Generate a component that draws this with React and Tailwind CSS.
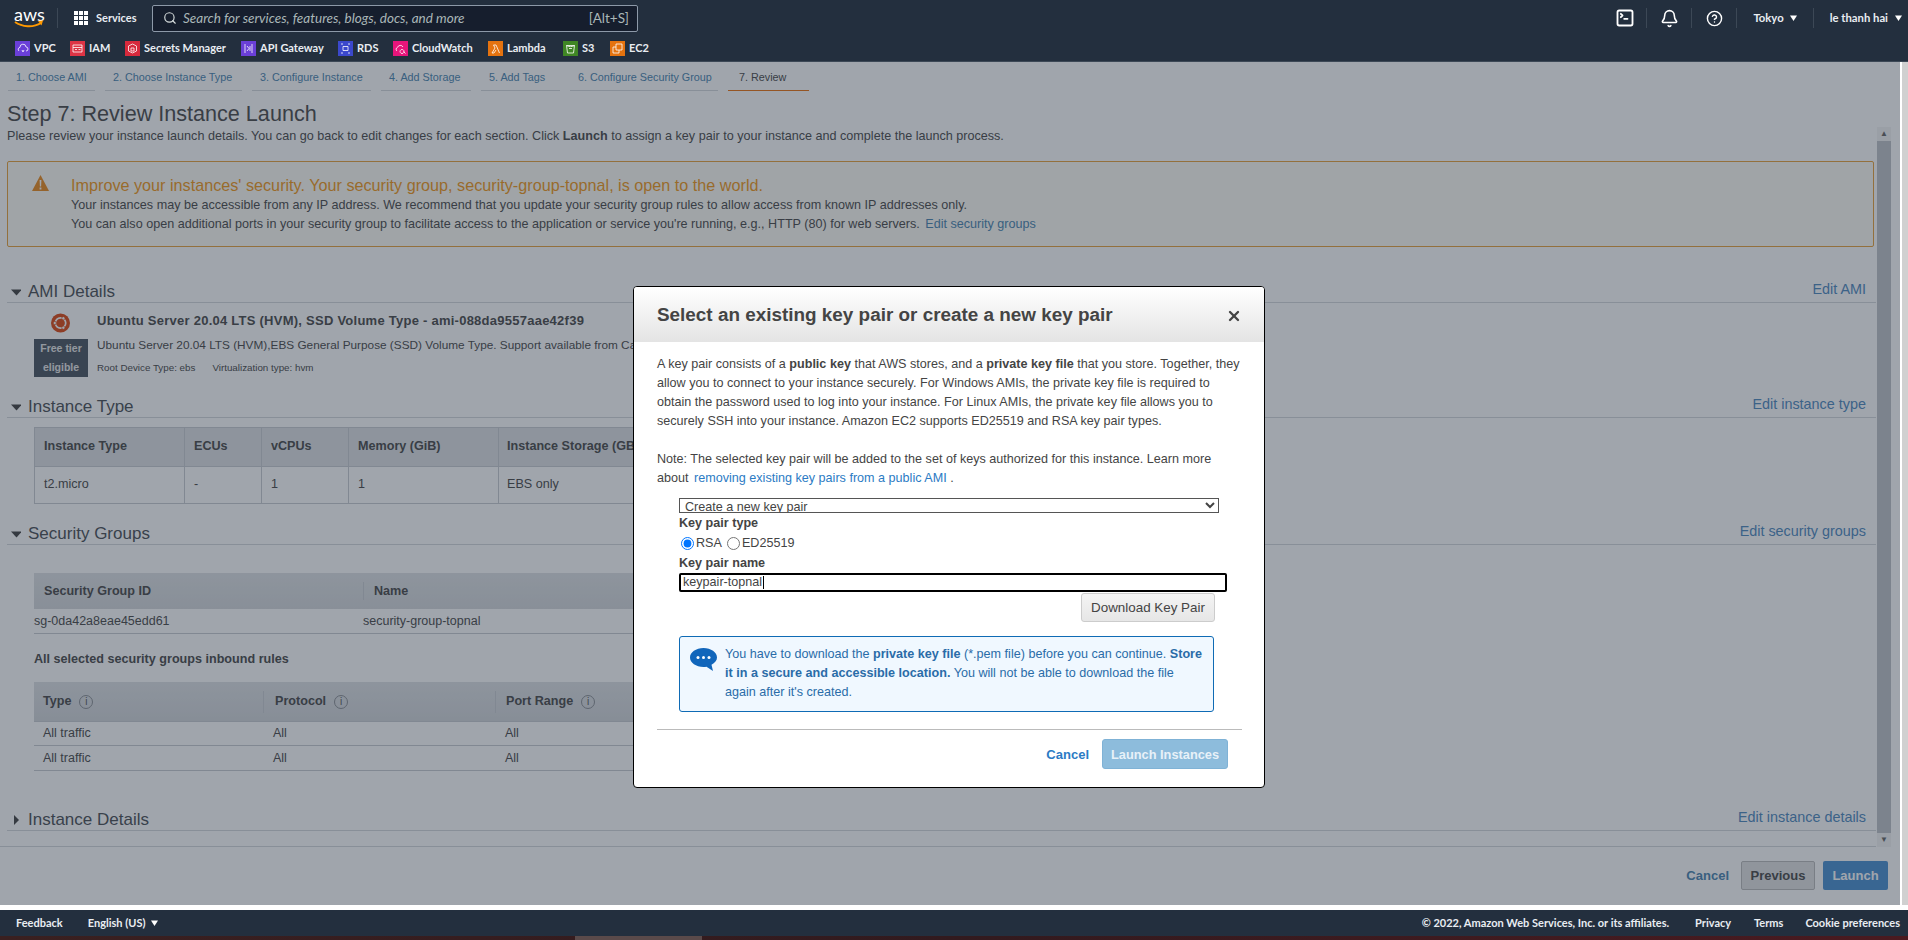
import React from "react";
import { Search, SquareTerminal, Bell, CircleHelp, X } from "lucide-react";

const services = [
  { n: "VPC", c: "bg-[#6a3fd8]", w: "w-[55px]", d: "M4 10a2 2 0 0 1 1-3.6A3 3 0 0 1 11 6a2 2 0 0 1 0 4M7 9l1 2 1-2" },
  { n: "IAM", c: "bg-[#dd3445]", w: "w-[55px]", d: "M3 4h9v7H3zM3 6.5h9M5 8.500h2M8.500 8.500h2" },
  { n: "Secrets Manager", c: "bg-[#d7293c]", w: "w-[116px]", d: "M7.500 3l4 2v5l-4 2-4-2V5zM6 7h3v3H6z" },
  { n: "API Gateway", c: "bg-[#6a3fd8]", w: "w-[97px]", d: "M4 3v9M11 3v9M6 5l2 2.500-2 2.500M9 5v5" },
  { n: "RDS", c: "bg-[#3b48cc]", w: "w-[55px]", d: "M5 5.500h5v4H5zM3 3h2M10 3h2M3 12h2M10 12h2" },
  { n: "CloudWatch", c: "bg-[#e7157b]", w: "w-[95px]", d: "M4 10a2 2 0 0 1 .5-3.600A3 3 0 0 1 10 6M9 8.500a2 2 0 1 0 .1 0M10.500 10.500l2 2" },
  { n: "Lambda", c: "bg-[#e5730f]", w: "w-[75px]", d: "M4 12l3-5-1.500-3H8l3.500 8M4 12h2l2-3" },
  { n: "S3", c: "bg-[#3f8624]", w: "w-[47px]", d: "M3.500 4.500h8l-1 7.500h-6zM3.500 4.500c2 1.500 6 1.500 8 0M6 7.500h3" },
  { n: "EC2", c: "bg-[#e5730f]", w: "", d: "M6 3h6v6H6zM3 6h3M3 6v6h6V9" },
];

const tabs = [
  ["1. Choose AMI", "w-[87px]"],
  ["2. Choose Instance Type", "w-[137px]"],
  ["3. Configure Instance", "w-[119px]"],
  ["4. Add Storage", "w-[90px]"],
  ["5. Add Tags", "w-[79px]"],
  ["6. Configure Security Group", "w-[148px]"],
];

function Caret({ right }) {
  return (
    <svg width="10" height="10" viewBox="0 0 10 10" className="shrink-0">
      {right ? <path d="M3 0l5 5-5 5z" fill="#444" /> : <path d="M0 2.500h11l-5.500 6z" fill="#444" />}
    </svg>
  );
}

function SectionHead({ title, edit, right, top }) {
  return (
    <div className={`flex h-[27px] items-center border-b border-[#d5d9dc] pl-[4px] pr-[10px] pt-[5px] ${top}`}>
      <Caret right={right} />
      <span className="ml-[7px] text-[17px] text-[#4a4f55]">{title}</span>
      <a className="ml-auto -mt-[3px] text-[14.4px] text-[#4f8abf]">{edit}</a>
    </div>
  );
}

function Info() {
  return (
    <span className="ml-[8px] inline-flex h-[14px] w-[14px] items-center justify-center rounded-full border border-[#8b8f94] text-[10px] font-normal text-[#555]">i</span>
  );
}

function UbuntuIcon() {
  return (
    <svg width="19" height="20" viewBox="0 0 20 20">
      <circle cx="10" cy="10" r="10" fill="#dd4814" />
      <circle cx="10" cy="10" r="5.500" fill="none" stroke="#fff" strokeWidth="1.800" />
      <circle cx="4" cy="10" r="1.700" fill="#fff" stroke="#dd4814" strokeWidth=".7" />
      <circle cx="13" cy="5" r="1.700" fill="#fff" stroke="#dd4814" strokeWidth=".7" />
      <circle cx="13" cy="15" r="1.700" fill="#fff" stroke="#dd4814" strokeWidth=".7" />
    </svg>
  );
}

export default function App() {
  return (
    <div className="relative flex h-[940px] w-[1908px] flex-col overflow-hidden bg-white font-['Liberation_Sans',Arial,sans-serif] text-[#4a4a4a]">
      {/* Top navigation */}
      <header className="h-[62px] shrink-0 border-b border-[#3c4856] bg-[#232f3e] font-['Lato',sans-serif] text-[11px] font-bold text-[#e9edf2]">
        <div className="flex h-[36px] items-center">
          <div className="relative ml-[14px] h-[26px] w-[30px]">
            <span className="absolute left-0 -top-[3px] text-[18px] font-normal leading-[24px] text-white">aws</span>
            <svg className="absolute left-0 top-[15px]" width="30" height="10" viewBox="0 0 30 10">
              <path d="M1 2c7 5 18 6 26 1" fill="none" stroke="#f90" strokeWidth="2" />
              <path d="M24 1l5-.5-1.500 5z" fill="#f90" />
            </svg>
          </div>
          <div className="ml-[13px] h-[20px] w-px bg-[#3c4856]" />
          <div className="ml-[16px] grid h-[14px] w-[14px] grid-cols-3 gap-[1.5px]">
            {Array.from({ length: 9 }).map((_, i) => <span key={i} className="bg-white" />)}
          </div>
          <span className="ml-[8px] w-[40px] whitespace-nowrap">Services</span>
          <div className="ml-[16px] flex h-[27px] w-[486px] items-center rounded-[2px] border border-[#8d99a8] bg-[#161e2d] pl-[10px] pr-[8px] font-normal">
            <Search size={14} color="#d5dbdb" strokeWidth={2} />
            <span className="ml-[6px] text-[13.5px] italic text-[#aab7b8]">Search for services, features, blogs, docs, and more</span>
            <span className="ml-auto text-[13.5px] text-[#aab7b8]">[Alt+S]</span>
          </div>
          <div className="ml-auto flex items-center text-[11.3px]">
            <SquareTerminal size={20} color="#fff" strokeWidth={2.2} />
            <div className="ml-[11px] h-[20px] w-px bg-[#3c4856]" />
            <Bell className="ml-[13px]" size={19} color="#fff" strokeWidth={2} />
            <div className="ml-[12px] h-[20px] w-px bg-[#3c4856]" />
            <CircleHelp className="ml-[14px]" size={17} color="#fff" strokeWidth={2} />
            <div className="ml-[13px] h-[20px] w-px bg-[#3c4856]" />
            <span className="ml-[16px]">Tokyo</span>
            <svg className="ml-[6px]" width="7" height="6" viewBox="0 0 7 6"><path d="M0 .5h7L3.500 6z" fill="#fff" /></svg>
            <div className="ml-[16px] h-[20px] w-px bg-[#3c4856]" />
            <span className="ml-[16px]">le thanh hai</span>
            <svg className="ml-[7px] mr-[6px]" width="7" height="6" viewBox="0 0 7 6"><path d="M0 .5h7L3.500 6z" fill="#fff" /></svg>
          </div>
        </div>
        <div className="flex h-[25px] items-center pl-[15px]">
          {services.map((s) => (
            <div key={s.n} className={`flex items-center ${s.w}`}>
              <svg width="15" height="15" viewBox="0 0 15 15" className={s.c}>
                <path d={s.d} fill="none" stroke="#fff" strokeWidth=".8" />
              </svg>
              <span className="ml-[4px] whitespace-nowrap">{s.n}</span>
            </div>
          ))}
        </div>
      </header>

      {/* Page */}
      <div className="flex h-[843px] shrink-0">
        <div className="relative flex w-[1900px] flex-col">
          <nav className="flex h-[29px] pl-[8px] text-[10.8px] text-[#4a85b0]">
            {tabs.map(([t, w]) => (
              <div key={t} className={`mr-[10px] flex items-center whitespace-nowrap border-b border-[#d5d9dc] pl-[8px] pt-[2px] ${w}`}>{t}</div>
            ))}
            <div className="flex w-[81px] items-center border-b border-[#ec7211] pl-[11px] pt-[2px] text-[#4a4a4a]">7. Review</div>
          </nav>
          <h1 className="h-[36px] pl-[7px] pt-[9px] text-[21.6px] leading-[28px]">Step 7: Review Instance Launch</h1>
          <div className="flex h-[720px]">
            <div className="w-[1876px] shrink-0 overflow-hidden border-b border-[#d5d9dc] pl-[7px] text-[12.6px]">
              <p className="mt-[1px] h-[16px] leading-[16px]">Please review your instance launch details. You can go back to edit changes for each section. Click <b>Launch</b> to assign a key pair to your instance and complete the launch process.</p>
              <div className="mt-[17px] flex h-[86px] w-[1867px] rounded-[2px] border border-[#e9a33c] bg-[#fffdf6] pl-[24px]">
                <svg className="mt-[13px] shrink-0" width="17" height="17" viewBox="0 0 17 17">
                  <path d="M8.500 0L17 16H0z" fill="#eb8c1f" />
                  <path d="M7.600 5h1.800l-.3 6.500H7.900zM7.600 12.500h1.800v2H7.600z" fill="#fff" />
                </svg>
                <div className="ml-[22px] pt-[13px]">
                  <div className="text-[16.2px] leading-[21px] text-[#f29a1b]">Improve your instances' security. Your security group, security-group-topnal, is open to the world.</div>
                  <div className="leading-[19px]">Your instances may be accessible from any IP address. We recommend that you update your security group rules to allow access from known IP addresses only.</div>
                  <div className="leading-[19px]">You can also open additional ports in your security group to facilitate access to the application or service you're running, e.g., HTTP (80) for web servers. <a className="ml-[2px] text-[#4a85b0]">Edit security groups</a></div>
                </div>
              </div>

              <SectionHead title="AMI Details" edit="Edit AMI" top="mt-[29px]" />
              <div className="flex h-[88px]">
                <div className="flex w-[90px] shrink-0 flex-col items-start pl-[27px] pt-[10px]">
                  <div className="ml-[17px] flex"><UbuntuIcon /></div>
                  <div className="mt-[6px] w-[54px] bg-[#4b5561] text-center text-[10.5px] font-bold leading-[19px] text-[#e8e8e8]">Free tier eligible</div>
                </div>
                <div className="pt-[9px]">
                  <div className="text-[13px] font-bold leading-[18px] tracking-[.25px]">Ubuntu Server 20.04 LTS (HVM), SSD Volume Type - ami-088da9557aae42f39</div>
                  <div className="mt-[7px] whitespace-nowrap text-[11.8px] leading-[16px]">Ubuntu Server 20.04 LTS (HVM),EBS General Purpose (SSD) Volume Type. Support available from Canonical (http://www.ubuntu.com/cloud/services).</div>
                  <div className="mt-[8px] flex text-[9.8px] leading-[14px]"><span>Root Device Type: ebs</span><span className="ml-[17px]">Virtualization type: hvm</span></div>
                </div>
              </div>

              <SectionHead title="Instance Type" edit="Edit instance type" />
              <div className="ml-[27px] mt-[9px] w-[900px] border-b border-l border-t border-[#c9cdd1]">
                <div className="flex h-[38px] items-center bg-[#dfe2e5] font-bold">
                  <div className="w-[149px] pb-[2px] pl-[9px]">Instance Type</div>
                  <div className="h-full w-px bg-[#c9cdd1]" />
                  <div className="w-[76px] pb-[2px] pl-[9px]">ECUs</div>
                  <div className="h-full w-px bg-[#c9cdd1]" />
                  <div className="w-[86px] pb-[2px] pl-[9px]">vCPUs</div>
                  <div className="h-full w-px bg-[#c9cdd1]" />
                  <div className="w-[149px] pb-[2px] pl-[9px]">Memory (GiB)</div>
                  <div className="h-full w-px bg-[#c9cdd1]" />
                  <div className="pb-[2px] pl-[8px]">Instance Storage (GB)</div>
                </div>
                <div className="flex h-[37px] items-center border-t border-[#c9cdd1]">
                  <div className="w-[149px] pb-[2px] pl-[9px]">t2.micro</div>
                  <div className="h-full w-px bg-[#c9cdd1]" />
                  <div className="w-[76px] pb-[2px] pl-[9px]">-</div>
                  <div className="h-full w-px bg-[#c9cdd1]" />
                  <div className="w-[86px] pb-[2px] pl-[9px]">1</div>
                  <div className="h-full w-px bg-[#c9cdd1]" />
                  <div className="w-[149px] pb-[2px] pl-[9px]">1</div>
                  <div className="h-full w-px bg-[#c9cdd1]" />
                  <div className="pb-[2px] pl-[8px]">EBS only</div>
                </div>
              </div>

              <SectionHead title="Security Groups" edit="Edit security groups" top="mt-[14px]" />
              <div className="ml-[27px] mt-[28px] w-[900px] text-[12.5px]">
                <div className="flex h-[36px] items-center bg-gradient-to-b from-[#dfe2e5] to-[#d6d9dc] text-[12.6px] font-bold">
                  <div className="w-[329px] pl-[10px]">Security Group ID</div>
                  <div className="h-[18px] w-px bg-[#c9cdd1]" />
                  <div className="pl-[10px]">Name</div>
                </div>
                <div className="flex h-[25px] items-center border-b border-[#c9cdd1]">
                  <div className="w-[329px]">sg-0da42a8eae45edd61</div>
                  <div>security-group-topnal</div>
                </div>
                <div className="mt-[16px] text-[12.6px] font-bold leading-[18px]">All selected security groups inbound rules</div>
                <div className="mt-[14px] flex h-[39px] items-center bg-gradient-to-b from-[#dfe2e5] to-[#d3d6da] text-[12.6px] font-bold">
                  <div className="w-[229px] pl-[9px]">Type<Info /></div>
                  <div className="h-[22px] w-px bg-[#c9cdd1]" />
                  <div className="w-[231px] pl-[11px]">Protocol<Info /></div>
                  <div className="h-[22px] w-px bg-[#c9cdd1]" />
                  <div className="pl-[10px]">Port Range<Info /></div>
                </div>
                <div className="flex h-[25px] items-center border-b border-t border-[#c9cdd1]">
                  <div className="w-[239px] pl-[9px]">All traffic</div>
                  <div className="w-[232px]">All</div>
                  <div>All</div>
                </div>
                <div className="flex h-[25px] items-center border-b border-[#c9cdd1]">
                  <div className="w-[239px] pl-[9px]">All traffic</div>
                  <div className="w-[232px]">All</div>
                  <div>All</div>
                </div>
              </div>

              <SectionHead title="Instance Details" edit="Edit instance details" right top="mt-[33px]" />
            </div>
            {/* inner scrollbar */}
            <div className="ml-px flex w-[23px] flex-col items-start">
              <div className="flex h-[14px] w-[14px] items-center justify-center bg-[#f5f5f5] text-[8px] leading-none text-[#666]">▲</div>
              <div className="h-[692px] w-[14px] bg-[#c0c4c8]" />
              <div className="flex h-[14px] w-[14px] items-center justify-center bg-[#f5f5f5] text-[8px] leading-none text-[#666]">▼</div>
            </div>
          </div>
          <div className="flex h-[58px] items-center justify-end pb-[1px] pr-[12px] text-[13px] font-bold">
            <a className="text-[#4a85b0]">Cancel</a>
            <button className="ml-[12px] h-[29px] w-[74px] rounded-[2px] border border-[#bbb] bg-[#e3e3e3] text-[13px] font-bold">Previous</button>
            <button className="ml-[8px] h-[29px] w-[65px] rounded-[2px] bg-[#4b90d2] text-[13px] font-bold text-white">Launch</button>
          </div>
          {/* backdrop */}
          <div className="absolute inset-0 bg-[#232f3e]/[0.43]" />
        </div>
        {/* page scrollbar */}
        <div className="flex w-[8px] border-l-[2px] border-white bg-[#d0d0d0]" />
      </div>

      {/* Dialog */}
      <div className="absolute left-[633px] top-[286px] z-10 h-[502px] w-[632px] overflow-hidden rounded-[4px] border border-black bg-white text-[12.6px] text-[#444]">
        <div className="flex h-[55px] items-center bg-gradient-to-b from-white to-[#e4e4e4] pl-[23px] pr-[22px]">
          <h2 className="pt-[2px] text-[18.9px] font-bold">Select an existing key pair or create a new key pair</h2>
          <X className="ml-auto mt-[3px]" size={16} color="#444" strokeWidth={3.5} />
        </div>
        <div className="px-[23px] pt-[13px] leading-[19px]">
          <p>A key pair consists of a <b>public key</b> that AWS stores, and a <b>private key file</b> that you store. Together, they allow you to connect to your instance securely. For Windows AMIs, the private key file is required to obtain the password used to log into your instance. For Linux AMIs, the private key file allows you to securely SSH into your instance. Amazon EC2 supports ED25519 and RSA key pair types.</p>
          <p className="mt-[19px]">Note: The selected key pair will be added to the set of keys authorized for this instance. Learn more about <a className="ml-[2px] text-[#2b7bc4]">removing existing key pairs from a public AMI</a> .</p>
          <div className="ml-[22px] mt-[10px]">
            <select className="block h-[15px] w-[540px] rounded-none border border-[#555] bg-white py-0 pl-[1px] text-[12.6px] leading-none" defaultValue="new">
              <option value="new">Create a new key pair</option>
            </select>
            <div className="h-[20px] font-bold leading-[20px]">Key pair type</div>
            <div className="flex h-[20px] items-center">
              <input type="radio" name="kp" defaultChecked className="ml-[2px] mr-[2px]" />
              <span>RSA</span>
              <input type="radio" name="kp" className="ml-[5px] mr-[2px]" />
              <span>ED25519</span>
            </div>
            <div className="h-[20px] font-bold leading-[20px]">Key pair name</div>
            <div className="relative w-[548px]">
              <input readOnly value="keypair-topnal" className="block h-[19px] w-full rounded-[2px] border-2 border-black bg-white pl-[2px] outline-none" />
              <span className="absolute left-[84px] top-[3px] h-[13px] w-px bg-black" />
            </div>
            <div className="mt-[1px] flex w-[536px] justify-end">
              <button className="h-[29px] w-[134px] rounded-[3px] border border-[#ccc] bg-gradient-to-b from-[#f4f4f4] to-[#e6e6e6] text-[13.4px]">Download Key Pair</button>
            </div>
            <div className="mt-[14px] flex h-[76px] w-[535px] rounded-[3px] border border-[#0f6bb5] bg-[#f0f8ff] pl-[10px] pt-[8px] text-[#2a6ca8]">
              <svg className="mt-[3px] shrink-0" width="27" height="24" viewBox="0 0 27 24">
                <path d="M13.500 0C6 0 0 4.300 0 9.500S6 19 13.500 19c1 0 2-.1 3-.3L23 23l-1.500-6.300C24.800 15 27 12.500 27 9.500 27 4.300 21 0 13.500 0z" fill="#1166bb" />
                <circle cx="8" cy="9.500" r="1.500" fill="#fff" /><circle cx="13.500" cy="9.500" r="1.500" fill="#fff" /><circle cx="19" cy="9.500" r="1.500" fill="#fff" />
              </svg>
              <p className="ml-[8px] w-[481px]">You have to download the <b>private key file</b> (*.pem file) before you can continue. <b>Store it in a secure and accessible location.</b> You will not be able to download the file again after it's created.</p>
            </div>
          </div>
          <div className="mt-[17px] h-px w-[585px] bg-[#bbb]" />
          <div className="mt-[9px] flex h-[30px] items-center justify-end">
            <a className="text-[13px] font-bold text-[#2b7bc4]">Cancel</a>
            <button className="ml-[13px] mr-[13px] h-[30px] w-[126px] rounded-[3px] border border-[#7fb2d6] bg-[#8dbcdc] text-[12.8px] font-bold text-[#e8f1f8]">Launch Instances</button>
          </div>
        </div>
      </div>

      {/* Footer */}
      <div className="mt-[5px] flex h-[26px] shrink-0 items-center bg-[#232f3e] pl-[16px] pr-[8px] font-['Lato',sans-serif] text-[11px] font-bold text-[#e9edf2]">
        <span>Feedback</span>
        <span className="ml-[25px]">English (US)</span>
        <svg className="ml-[6px]" width="7" height="6" viewBox="0 0 7 6"><path d="M0 .5h7L3.500 6z" fill="#fff" /></svg>
        <span className="ml-auto">© 2022, Amazon Web Services, Inc. or its affiliates.</span>
        <span className="ml-[26px]">Privacy</span>
        <span className="ml-[23px]">Terms</span>
        <span className="ml-[22px]">Cookie preferences</span>
      </div>
      <div className="flex h-[4px] shrink-0 bg-gradient-to-r from-[#3a2020] via-[#321a1e] to-[#4a1a20]">
        <div className="ml-[575px] w-[127px] bg-[#5a4a4a]" />
      </div>
    </div>
  );
}
